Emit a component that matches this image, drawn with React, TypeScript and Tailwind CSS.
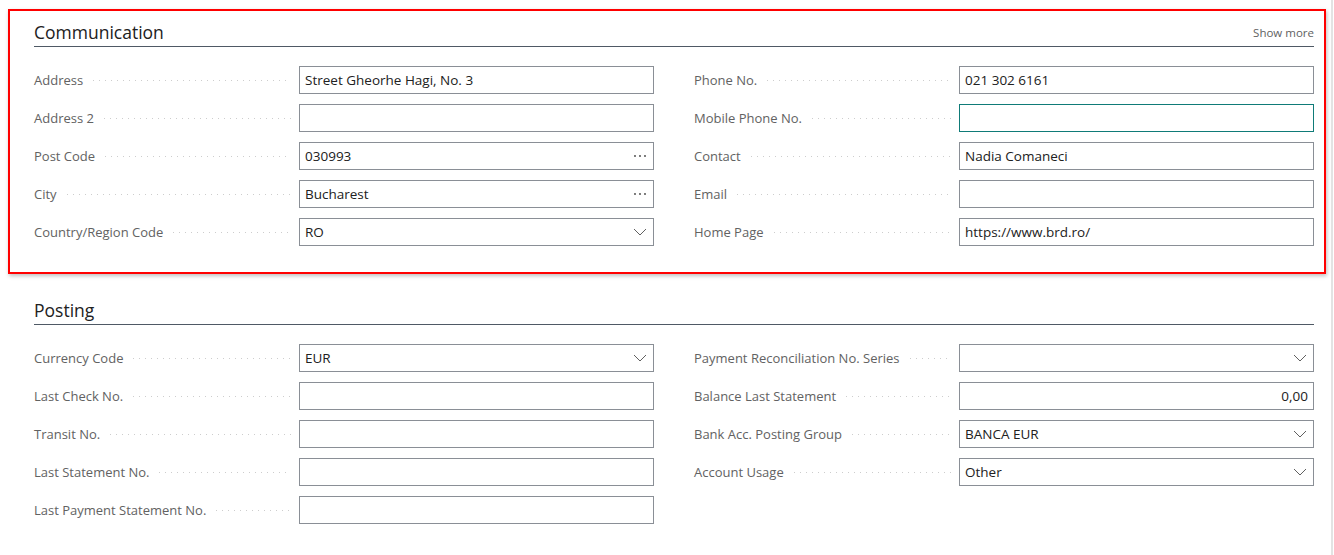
import React from "react";

type Field = {
  label: string;
  value?: string;
  kind?: "text" | "lookup" | "select" | "number";
  focused?: boolean;
};

const font = { fontFamily: '"Segoe UI", "Open Sans", "Noto Sans", sans-serif' };

function Chevron() {
  return (
    <svg width="14" height="8" viewBox="0 0 14 8" className="shrink-0">
      <polyline points="1,1 7,7 13,1" fill="none" stroke="#606060" strokeWidth="1" />
    </svg>
  );
}

function Dots() {
  return (
    <svg width="14" height="4" viewBox="0 0 14 4" className="shrink-0">
      <circle cx="2" cy="2" r="0.9" fill="#404040" />
      <circle cx="7" cy="2" r="0.9" fill="#404040" />
      <circle cx="12" cy="2" r="0.9" fill="#404040" />
    </svg>
  );
}

function Row({ f }: { f: Field }) {
  return (
    <div className="flex items-center h-[28px]">
      <span className="text-[13px] text-[#626262] whitespace-nowrap leading-none">{f.label}</span>
      <div className="flex-1 ml-[8px] mr-[8px] h-px bg-[linear-gradient(to_right,#cdcdcd_1px,transparent_1px)] bg-[length:6px_1px] bg-repeat-x bg-[position:2px_0]" />
      <div
        className={
          "w-[355px] h-[28px] shrink-0 bg-white border flex items-center pl-[5px] pr-[6px] " +
          (f.focused ? "border-[#0f7b78]" : "border-[#8a8f96]")
        }
      >
        <span
          className={
            "flex-1 text-[13.5px] text-[#212121] whitespace-nowrap leading-none pt-[1px] " +
            (f.kind === "number" ? "text-right -mr-[1px]" : "")
          }
        >
          {f.value ?? ""}
        </span>
        {f.kind === "lookup" && <Dots />}
        {f.kind === "select" && <Chevron />}
      </div>
    </div>
  );
}

function Column({ fields }: { fields: Field[] }) {
  return (
    <div className="flex flex-col gap-[10px] w-[620px]">
      {fields.map((f) => (
        <Row key={f.label} f={f} />
      ))}
    </div>
  );
}

function Header({ title, more }: { title: string; more?: boolean }) {
  return (
    <div className="flex items-end justify-between border-b border-[#4f5965] pb-[3px]">
      <span className="text-[17.5px] text-[#212121] leading-[22px]">{title}</span>
      {more && <span className="text-[11.5px] text-[#616161] leading-[16px] mb-[2px]">Show more</span>}
    </div>
  );
}

export default function App() {
  const commLeft: Field[] = [
    { label: "Address", value: "Street Gheorhe Hagi, No. 3" },
    { label: "Address 2" },
    { label: "Post Code", value: "030993", kind: "lookup" },
    { label: "City", value: "Bucharest", kind: "lookup" },
    { label: "Country/Region Code", value: "RO", kind: "select" },
  ];
  const commRight: Field[] = [
    { label: "Phone No.", value: "021 302 6161" },
    { label: "Mobile Phone No.", focused: true },
    { label: "Contact", value: "Nadia Comaneci" },
    { label: "Email" },
    { label: "Home Page", value: "https://www.brd.ro/" },
  ];
  const postLeft: Field[] = [
    { label: "Currency Code", value: "EUR", kind: "select" },
    { label: "Last Check No." },
    { label: "Transit No." },
    { label: "Last Statement No." },
    { label: "Last Payment Statement No." },
  ];
  const postRight: Field[] = [
    { label: "Payment Reconciliation No. Series", kind: "select" },
    { label: "Balance Last Statement", value: "0,00", kind: "number" },
    { label: "Bank Acc. Posting Group", value: "BANCA EUR", kind: "select" },
    { label: "Account Usage", value: "Other", kind: "select" },
  ];

  return (
    <div className="w-[1334px] h-[555px] bg-white flex overflow-hidden" style={font}>
      <div className="flex-1 flex flex-col">
        <div className="mt-[9px] ml-[8px] w-[1318px] border-2 border-[#ff0000] shadow-[1px_2px_4px_rgba(0,0,0,0.25)] pl-[24px] pr-[10px] pt-[10px] pb-[26px]">
          <Header title="Communication" more />
          <div className="flex justify-between mt-[19px]">
            <Column fields={commLeft} />
            <Column fields={commRight} />
          </div>
        </div>
        <div className="ml-[34px] w-[1280px] mt-[25px]">
          <Header title="Posting" />
          <div className="flex justify-between mt-[19px]">
            <Column fields={postLeft} />
            <Column fields={postRight} />
          </div>
        </div>
      </div>
      <div className="w-[2px] bg-[#e3e3e3] mr-[1px]" />
    </div>
  );
}
